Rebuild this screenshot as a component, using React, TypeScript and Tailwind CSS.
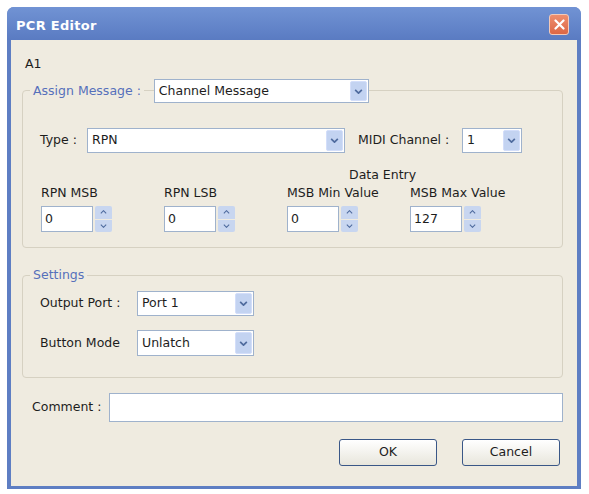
import React from "react";

const font = { fontFamily: '"DejaVu Sans", Verdana, sans-serif' };

function Chevron({ dir = "down", small = false }: { dir?: "down" | "up"; small?: boolean }) {
  const w = small ? 7 : 9;
  const h = small ? 4 : 5;
  return (
    <svg width={w} height={h} viewBox="0 0 10 6" className="block">
      <path
        d={dir === "down" ? "M1 1 L5 5 L9 1" : "M1 5 L5 1 L9 5"}
        fill="none"
        stroke="#4f6b9e"
        strokeWidth={small ? 1.6 : 2}
      />
    </svg>
  );
}

function Select({ value, width, height = 25 }: { value: string; width: number; height?: number }) {
  return (
    <div
      className="flex items-stretch border border-[#9fb2cc] bg-white text-[12.5px] text-[#1d1d1d]"
      style={{ width, height }}
    >
      <div className="flex flex-1 items-center pl-[4px]">{value}</div>
      <div className="m-[1px] flex w-[17px] items-center justify-center rounded-[2px] border border-[#d3defa] bg-[#c3d3f1]">
        <Chevron />
      </div>
    </div>
  );
}

function Spin({ label, value }: { label: string; value: string }) {
  return (
    <div className="flex w-[123px] flex-col">
      <div className="h-[15px] leading-[15px] text-[12.5px] text-[#1d1d1d]">{label}</div>
      <div className="mt-[6px] flex h-[26px]">
        <div className="flex w-[52px] items-center border border-[#9fb2cc] bg-white pl-[3px] text-[12.5px] text-[#1d1d1d]">
          {value}
        </div>
        <div className="ml-[2px] flex w-[17px] flex-col gap-[1px]">
          <div className="flex flex-1 items-center justify-center rounded-t-[2px] bg-[#c8d6f0]">
            <Chevron dir="up" small />
          </div>
          <div className="flex flex-1 items-center justify-center rounded-b-[2px] bg-[#c8d6f0]">
            <Chevron small />
          </div>
        </div>
      </div>
    </div>
  );
}

function Button({ label }: { label: string }) {
  return (
    <div className="flex h-[27px] w-[98px] items-center justify-center rounded-[3px] border border-[#3a5787] bg-gradient-to-b from-[#ffffff] to-[#e8e6dc] text-[12.5px] text-[#1d1d1d]">
      {label}
    </div>
  );
}

export default function App() {
  return (
    <div className="h-[494px] w-[589px] bg-white pl-[7px] pt-[7px]" style={font}>
      <div className="flex h-[482px] w-[574px] flex-col rounded-t-[7px] bg-[#5e7ec3]">
        {/* title bar */}
        <div className="flex h-[33px] items-start justify-between rounded-t-[7px] bg-gradient-to-b from-[#7193d4] to-[#5a7bc2] pl-[9px] pr-[12px]">
          <div className="mt-[9px] text-[13px] font-bold tracking-[0.3px] text-white">PCR Editor</div>
          <div className="mt-[7px] flex h-[21px] w-[20px] items-center justify-center rounded-[3px] border border-[#f3c9b8] bg-gradient-to-b from-[#ee8e6e] to-[#dc6746]">
            <svg width="11" height="11" viewBox="0 0 11 11">
              <path d="M1.5 1.5 L9.5 9.5 M9.5 1.5 L1.5 9.5" stroke="white" strokeWidth="2.2" strokeLinecap="round" />
            </svg>
          </div>
        </div>

        {/* body */}
        <div className="mx-[4px] mb-[3px] flex flex-1 flex-col bg-[#efebe0] text-[12.5px] text-[#1d1d1d]">
          <div className="ml-[14px] mt-[16px] h-[16px] leading-[16px]">A1</div>

          {/* Assign message group */}
          <div className="ml-[11px] mt-[18px] h-[158px] w-[541px] rounded-[4px] border border-[#d6d1c2]">
            <div className="-mt-[12px] flex items-center">
              <div className="ml-[7px] bg-[#efebe0] px-[3px] text-[#5670bb]">Assign Message :</div>
              <div className="ml-[10px]">
                <Select value="Channel Message" width={215} height={24} />
              </div>
            </div>

            <div className="mt-[25px] flex items-center pl-[17px]">
              <div className="w-[47px]">Type :</div>
              <Select value="RPN" width={258} />
              <div className="ml-[13px] w-[104px]">MIDI Channel :</div>
              <Select value="1" width={60} />
            </div>

            <div className="ml-[326px] mt-[14px] h-[15px] leading-[15px]">Data Entry</div>

            <div className="mt-[3px] flex pl-[18px]">
              <Spin label="RPN MSB" value="0" />
              <Spin label="RPN LSB" value="0" />
              <Spin label="MSB Min Value" value="0" />
              <Spin label="MSB Max Value" value="127" />
            </div>
          </div>

          {/* Settings group */}
          <div className="ml-[11px] mt-[27px] h-[103px] w-[541px] rounded-[4px] border border-[#d6d1c2]">
            <div className="-mt-[9px] flex">
              <div className="ml-[7px] h-[16px] bg-[#efebe0] px-[3px] leading-[16px] text-[#5670bb]">Settings</div>
            </div>
            <div className="mt-[8px] flex items-center pl-[17px]">
              <div className="w-[97px]">Output Port :</div>
              <Select value="Port 1" width={117} />
            </div>
            <div className="mt-[14px] flex items-center pl-[17px]">
              <div className="w-[97px]">Button Mode</div>
              <Select value="Unlatch" width={117} height={26} />
            </div>
          </div>

          {/* Comment */}
          <div className="mt-[15px] flex items-center pl-[21px]">
            <div className="w-[77px]">Comment :</div>
            <div className="h-[29px] w-[454px] border border-[#9fb2cc] bg-white" />
          </div>

          <div className="mt-[17px] flex pl-[328px]">
            <Button label="OK" />
            <div className="ml-[25px]">
              <Button label="Cancel" />
            </div>
          </div>
        </div>
      </div>
    </div>
  );
}
